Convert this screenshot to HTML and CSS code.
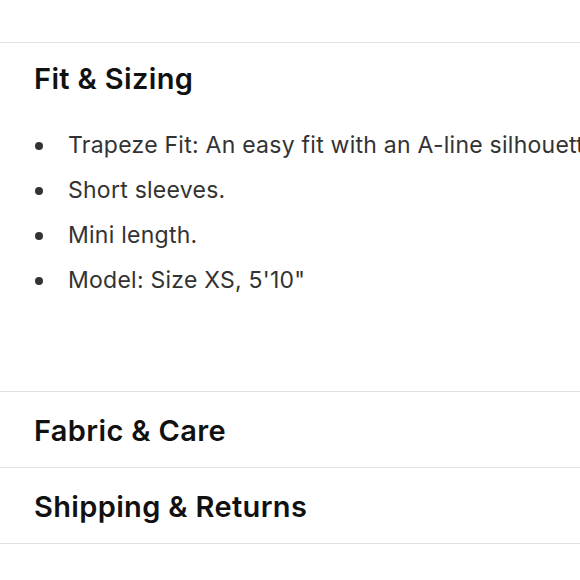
FILE: index.html
```html
<!DOCTYPE html>
<html lang="en">
<head>
<meta charset="utf-8">
<title>Product details</title>
<link rel="stylesheet" href="styles.css">
</head>
<body>
<div class="accordion">
  <section class="panel open">
    <h2 class="panel-title">Fit &amp; Sizing</h2>
    <ul class="panel-list">
      <li>Trapeze Fit: An easy fit with an A-line silhouette.</li>
      <li>Short sleeves.</li>
      <li>Mini length.</li>
      <li>Model: Size XS, 5'10"</li>
    </ul>
  </section>
  <section class="panel">
    <h2 class="panel-title">Fabric &amp; Care</h2>
  </section>
  <section class="panel">
    <h2 class="panel-title">Shipping &amp; Returns</h2>
  </section>
</div>
</body>
</html>
```

FILE: styles.css
```css
html, body {
  margin: 0;
  padding: 0;
  background: #ffffff;
  overflow: hidden;
}

body {
  width: 580px;
  height: 580px;
  font-family: Inter, "Liberation Sans", sans-serif;
  color: #111111;
}

.accordion {
  margin-top: 42px;
  border-bottom: 1px solid #e2e2e2;
}

.panel {
  border-top: 1px solid #e2e2e2;
  padding: 21px 34px 18px;
}

.panel.open {
  padding-top: 18px;
  padding-bottom: 88px;
}

.panel-title {
  margin: 0;
  font-size: 29px;
  line-height: 36px;
  font-weight: 600;
  letter-spacing: 0.35px;
  color: #111111;
  white-space: nowrap;
}

.panel-list {
  list-style: none;
  margin: 26px 0 0;
  padding: 0;
}

.panel-list li {
  display: flex;
  align-items: center;
  font-size: 23px;
  line-height: 45px;
  letter-spacing: 0.25px;
  color: #333333;
  white-space: nowrap;
}

.panel-list li::before {
  content: "";
  flex: 0 0 auto;
  width: 8px;
  height: 8px;
  border-radius: 50%;
  background: #333333;
  margin: 0 25px 0 1px;
}
```
